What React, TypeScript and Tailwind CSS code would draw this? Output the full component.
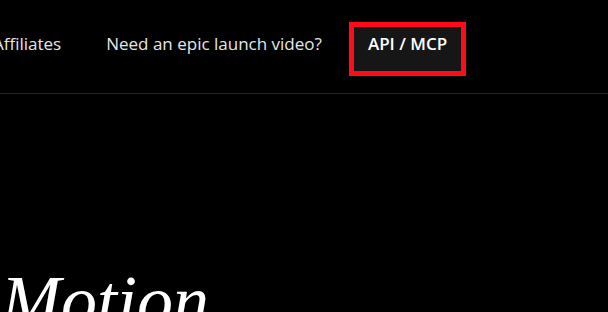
export default function App() {
  return (
    <div className="h-[312px] w-[608px] overflow-hidden bg-black font-['Open_Sans',sans-serif] text-[#e6e6e6]">
      <header className="flex h-[94px] items-start border-b border-[#262626] pt-[22px]">
        <nav className="-ml-[7px] flex items-start gap-[45px] text-[17px]">
          <a href="#" className="pt-[13px] leading-none">
            Affiliates
          </a>
          <a href="#" className="pt-[13px] leading-none">
            Need an epic launch video?
          </a>
          <a
            href="#"
            className="-ml-[18px] flex h-[54px] items-start border-[5px] border-[#ff0b1b] bg-[#161616] px-[14px] pt-[8px] font-semibold leading-none text-white"
          >
            API / MCP
          </a>
        </nav>
      </header>
      <section className="pl-[1px] pt-[171px]">
        <h1 className="font-['Liberation_Serif',serif] text-[72px] italic leading-none text-white">
          Motion
        </h1>
      </section>
    </div>
  );
}
